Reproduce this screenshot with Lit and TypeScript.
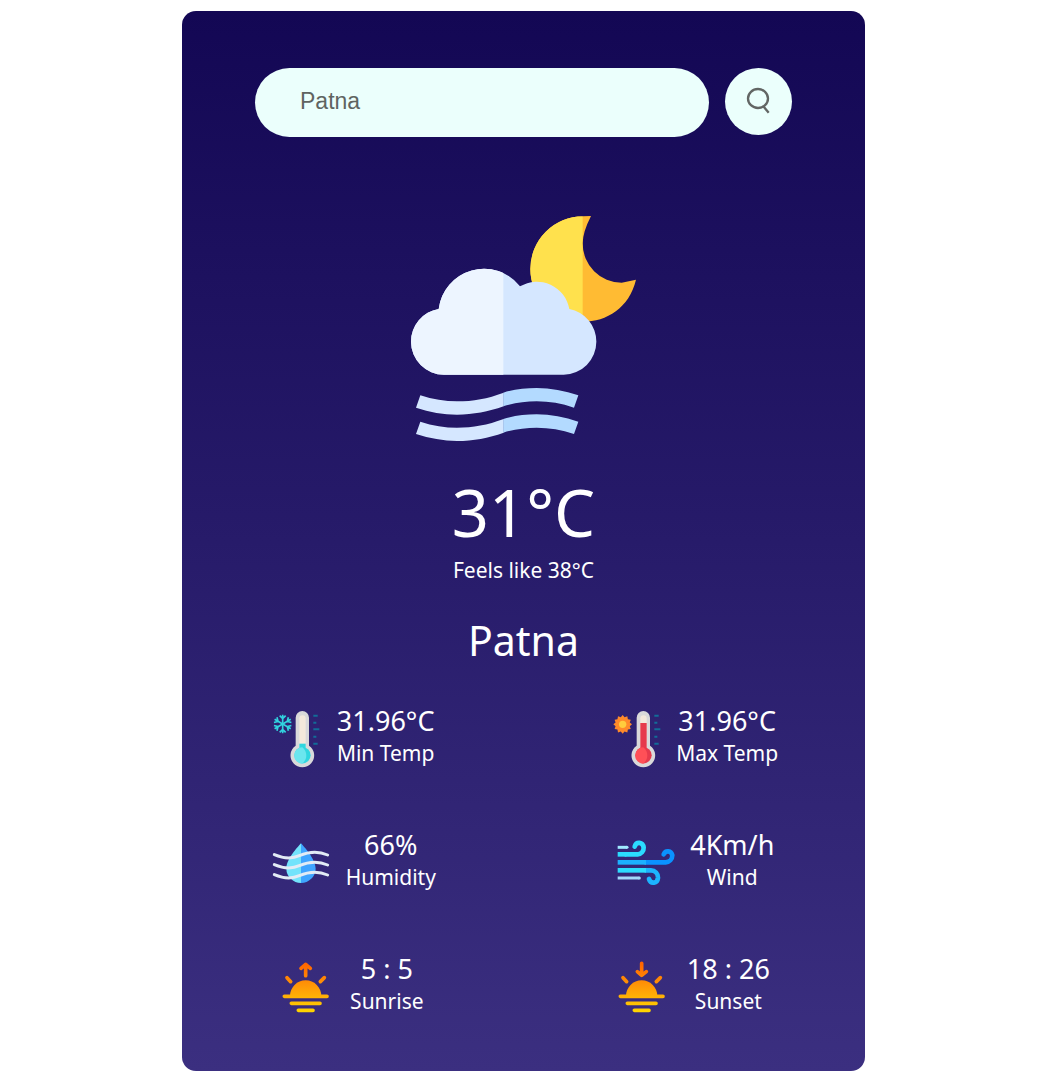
import { LitElement, html, css, svg, TemplateResult } from "lit";
import { customElement, property, state } from "lit/decorators.js";

type IconName = "cold" | "hot" | "humidity" | "wind" | "sunrise" | "sunset";

interface Reading {
  icon: IconName;
  value: string;
  label: string;
}

const thermometer = (level: number, fluid: string, shine: string) => svg`
  <path d="M101 68a20 20 0 0 1 40 0v84a35.500 35.500 0 1 1-40 0z" fill="#d9d9da" />
  <path d="M112 70a9.500 9.500 0 0 1 19 0v90h-19z" fill="#f4e9dc" />
  <path d=${`M112 ${level}h19v${165 - level}h-19z`} fill=${fluid} />
  <circle cx="121.500" cy="181" r="24.500" fill=${fluid} />
  <path d="M121 157a24.500 24.500 0 0 0 0 49c16-13 16-36 0-49z" fill=${shine} />
  <path d="M154 62h13M154 83h9M154 103h18M154 125h9M154 146h13" stroke="#126c98" stroke-width="6" />
`;

const flakeArm = svg`<path d="M62 87V59M53 62l9 9 9-9" />`;

const sunPoints = Array.from({ length: 24 }, (_, i) => {
  const r = i % 2 ? 22 : 28;
  const a = (i * Math.PI) / 12;
  return `${(59 + r * Math.sin(a)).toFixed(1)},${(88 - r * Math.cos(a)).toFixed(1)}`;
}).join(" ");

const horizon = (arrow: string) => svg`
  <defs>
    <linearGradient id="glow" gradientUnits="userSpaceOnUse" x1="0" y1="52" x2="0" y2="200">
      <stop offset="0" stop-color="#ff6200" />
      <stop offset="0.500" stop-color="#ff9a08" />
      <stop offset="1" stop-color="#ffd400" />
    </linearGradient>
  </defs>
  <path d="M85 153a47 47 0 0 1 94 0z" fill="url(#glow)" />
  <path d=${`M68 154H196V154.1M89 175H175V175.1M110 196H154V196.1M76 98L87 110M188 98L176 110${arrow}`}
    fill="none" stroke="url(#glow)" stroke-width="11" stroke-linecap="round" stroke-linejoin="round" />
`;

const icons: Record<IconName, { box: string; wide: boolean; art: TemplateResult }> = {
  cold: {
    box: "21 45 156 171",
    wide: false,
    art: svg`
      <g fill="none" stroke="#31d3df" stroke-width="5">
        ${[0, 60, 120, 180, 240, 300].map((a) => svg`<g transform=${`rotate(${a} 62 87)`}>${flakeArm}</g>`)}
      </g>
      ${thermometer(146, "#31d6df", "#6be6ee")}`,
  },
  hot: {
    box: "15 45 156 171",
    wide: false,
    art: svg`
      <polygon points=${sunPoints} fill="#ff8a2a" />
      <circle cx="59" cy="88" r="11" fill="#ffcc3d" />
      ${thermometer(84, "#e63a4c", "#ff5057")}`,
  },
  humidity: {
    box: "33 41 171 171",
    wide: true,
    art: svg`
      <path d="M117 69C107 80 73 117 73 145a44 44 0 0 0 44 43z" fill="#73e3fb" />
      <path d="M117 69C127 80 161 117 161 145a44 44 0 0 1-44 43z" fill="#3fa5ff" />
      <g fill="none" stroke="#e2ebf5" stroke-width="9" stroke-linecap="round">
        <path d="M37 103C58 112 86 118 112 106C140 94 165 90 197 104" />
        <path d="M37 133C58 142 86 148 112 136C140 124 165 120 197 134" />
        <path d="M37 163C58 172 86 178 112 166C140 154 165 150 197 164" />
      </g>`,
  },
  wind: {
    box: "52 43 171 171",
    wide: true,
    art: svg`
      <g fill="none" stroke-width="14">
        <path d="M54 83H82" stroke="#a0eaff" stroke-width="9" />
        <circle cx="82" cy="83" r="4.500" fill="#a0eaff" />
        <path d="M54 104H80" stroke="#2bdcff" />
        <path d="M78 104H114A19 19 0 0 0 132 84A14 17 0 0 0 105 81" stroke="#2bdcff" stroke-linecap="round" />
        <path d="M137 128H198A21 21 0 0 0 218 107A14 16 0 0 0 192 104" stroke="#0a92ff" stroke-linecap="round" />
        <path d="M54 128H139" stroke="#1cb0ff" />
        <path d="M138 152H154A21 21 0 0 1 175 174A14 17 0 0 1 148 178" stroke="#1cb4ff" stroke-linecap="round" />
        <path d="M54 152H139" stroke="#2bdcff" />
        <path d="M54 175H119" stroke="#a4d8fb" stroke-width="9" />
        <circle cx="119" cy="175" r="4.500" fill="#a4d8fb" />
      </g>`,
  },
  sunrise: {
    box: "46 39 171 171",
    wide: true,
    art: horizon("M132 92V58M118 70L132 58L146 70"),
  },
  sunset: {
    box: "49 39 171 171",
    wide: true,
    art: horizon("M132 55V91M119 80L132 91L146 80"),
  },
};

@customElement("weather-reading")
export class WeatherReading extends LitElement {
  static styles = css`
    :host {
      display: flex;
      align-items: flex-end;
      gap: 16px;
    }
    .icon {
      flex: none;
      width: 57px;
      height: 57px;
      overflow: visible;
    }
    .icon.narrow {
      width: 52px;
    }
    .text {
      margin: 0;
      display: flex;
      flex-direction: column-reverse;
      text-align: center;
    }
    .value {
      margin: 0;
      font-size: 27px;
      line-height: 36px;
    }
    .label {
      font-size: 21px;
      line-height: 28px;
    }
  `;

  @property({ attribute: false }) reading!: Reading;

  render() {
    const { icon, value, label } = this.reading;
    const { box, wide, art } = icons[icon];
    return html`
      <svg class=${wide ? "icon" : "icon narrow"} viewBox=${box} aria-hidden="true">${art}</svg>
      <dl class="text">
        <dt class="label">${label}</dt>
        <dd class="value">${value}</dd>
      </dl>
    `;
  }
}

const moonPath =
  "M573 33L549 34A158 158 0 0 0 391 192A158 158 0 0 0 549 350C620 350 688 308 708 224L665 233A117 118 0 0 1 548 115Q548 82 573 33z";
const cloudPath =
  "M132 509A99 99 0 0 1 33 410A99 99 0 0 1 116 312A137 137 0 0 1 360 244A99 99 0 0 1 508 312A99 99 0 0 1 589 410A99 99 0 0 1 491 509z";

@customElement("app-root")
export class AppRoot extends LitElement {
  static styles = css`
    :host {
      display: block;
      box-sizing: border-box;
      padding: 11px 5px 7px 0;
      font-family: "Segoe UI", "Noto Sans", sans-serif;
      color: #fff;
    }
    .card {
      box-sizing: border-box;
      width: 100%;
      max-width: 683px;
      margin: 0 auto;
      padding: 57px 0 56px;
      border-radius: 14px;
      background: linear-gradient(#130754, #3b2f80);
    }
    .search {
      display: flex;
      align-items: flex-start;
      gap: 16px;
      padding: 0 73px;
    }
    .city-input {
      flex: 1;
      min-width: 0;
      box-sizing: border-box;
      height: 69px;
      padding: 0 45px 3px;
      border: 0;
      border-radius: 35px;
      background: #ebfffc;
      color: #5f6461;
      font: 23px "Liberation Sans", Arial, sans-serif;
    }
    .search-button {
      flex: none;
      display: flex;
      align-items: center;
      justify-content: center;
      width: 67px;
      height: 67px;
      padding: 0 0 2px;
      border: 0;
      border-radius: 50%;
      background: #ebfffc;
      color: #626664;
      cursor: pointer;
    }
    .search-icon {
      width: 24px;
      height: 26px;
    }
    .now {
      padding-top: 79px;
      text-align: center;
    }
    .sky {
      display: block;
      width: 225px;
      height: 225px;
      margin: 0 auto 31px;
    }
    .temperature {
      margin: 0;
      font-size: 65px;
      line-height: 80px;
      font-weight: 400;
    }
    .feels {
      margin: 2px 0 26px;
      font-size: 21px;
      line-height: 32px;
    }
    .city {
      margin: 0;
      font-size: 41px;
      line-height: 56px;
      font-weight: 400;
    }
    .readings {
      display: flex;
      flex-direction: column;
      gap: 60px;
      padding-top: 35px;
    }
    .pair {
      display: flex;
      justify-content: space-around;
    }
  `;

  @state() private query = "Patna";
  @state() private city = "Patna";

  private rows: Reading[][] = [
    [
      { icon: "cold", value: "31.96°C", label: "Min Temp" },
      { icon: "hot", value: "31.96°C", label: "Max Temp" },
    ],
    [
      { icon: "humidity", value: "66%", label: "Humidity" },
      { icon: "wind", value: "4Km/h", label: "Wind" },
    ],
    [
      { icon: "sunrise", value: "5 : 5", label: "Sunrise" },
      { icon: "sunset", value: "18 : 26", label: "Sunset" },
    ],
  ];

  private onInput(e: Event) {
    this.query = (e.target as HTMLInputElement).value;
  }

  private onSubmit(e: Event) {
    e.preventDefault();
    this.city = this.query.trim() || this.city;
  }

  render() {
    return html`
      <main class="card">
        <form class="search" @submit=${this.onSubmit}>
          <input class="city-input" type="text" aria-label="City" .value=${this.query} @input=${this.onInput} />
          <button class="search-button" type="submit" aria-label="Search">
            <svg class="search-icon" viewBox="171 264 72 78" fill="none" stroke="currentColor" stroke-width="7" overflow="visible" aria-hidden="true">
              <ellipse cx="204" cy="295.500" rx="30" ry="28.500" />
              <path d="M220 319L236 338" />
            </svg>
          </button>
        </form>
        <section class="now">
          <svg class="sky" viewBox="33 33 675 675" aria-hidden="true">
            <defs>
              <clipPath id="cloud-left"><rect x="0" y="0" width="310" height="720" /></clipPath>
              <clipPath id="moon-left"><rect x="380" y="0" width="168" height="400" /></clipPath>
            </defs>
            <path fill="#ffbb33" d=${moonPath} />
            <path fill="#ffe14d" clip-path="url(#moon-left)" d=${moonPath} />
            <path fill="#d5e7ff" d=${cloudPath} />
            <path fill="#edf5ff" clip-path="url(#cloud-left)" d=${cloudPath} />
            ${[0, 79].map(
              (dy) => svg`
                <g transform=${`translate(0 ${dy})`}>
                  <path fill="#d5e7ff" d="M61 571C98 583 135 589 171 589C220 589 262 581 311 563V604C265 620 220 629 171 629C130 629 89 621 48 608z" />
                  <path fill="#b3daff" d="M310 563C342 553 376 549 410 549C452 549 494 557 535 571L522 608C485 595 448 589 410 589C376 589 342 594 310 604z" />
                </g>`
            )}
          </svg>
          <h1 class="temperature">31°C</h1>
          <p class="feels">Feels like 38°C</p>
          <h2 class="city">${this.city}</h2>
        </section>
        <section class="readings">
          ${this.rows.map(
            (row) => html`
              <div class="pair">
                ${row.map((r) => html`<weather-reading .reading=${r}></weather-reading>`)}
              </div>
            `
          )}
        </section>
      </main>
    `;
  }
}
